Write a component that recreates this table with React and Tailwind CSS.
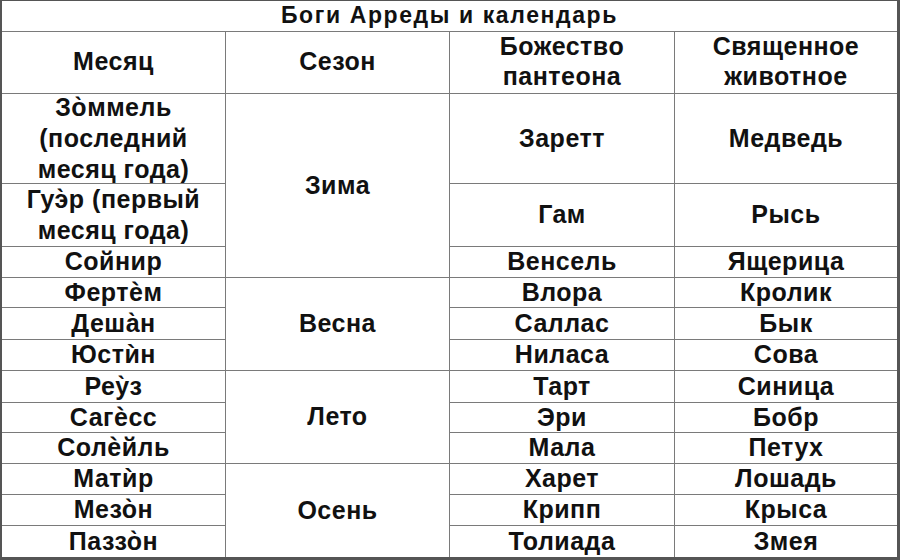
const months = [
  { name: ["Зо̀ммель", "(последний", "месяц года)"], god: "Заретт", animal: "Медведь", row: "row-start-3" },
  { name: ["Гуэ̀р (первый", "месяц года)"], god: "Гам", animal: "Рысь", row: "row-start-4" },
  { name: ["Сойнир"], god: "Венсель", animal: "Ящерица", row: "row-start-5" },
  { name: ["Фертѐм"], god: "Влора", animal: "Кролик", row: "row-start-6" },
  { name: ["Деша̀н"], god: "Саллас", animal: "Бык", row: "row-start-7" },
  { name: ["Юстѝн"], god: "Ниласа", animal: "Сова", row: "row-start-8" },
  { name: ["Реу̀з"], god: "Тарт", animal: "Синица", row: "row-start-9" },
  { name: ["Сагѐсс"], god: "Эри", animal: "Бобр", row: "row-start-10" },
  { name: ["Солѐйль"], god: "Мала", animal: "Петух", row: "row-start-11" },
  { name: ["Матѝр"], god: "Харет", animal: "Лошадь", row: "row-start-12" },
  { name: ["Мезо̀н"], god: "Крипп", animal: "Крыса", row: "row-start-13" },
  { name: ["Паззо̀н"], god: "Толиада", animal: "Змея", row: "row-start-14" },
];

const seasons = [
  { name: "Зима", row: "row-start-3 row-span-3" },
  { name: "Весна", row: "row-start-6 row-span-3" },
  { name: "Лето", row: "row-start-9 row-span-3" },
  { name: "Осень", row: "row-start-12 row-span-3" },
];

function Cell({ children, className = "" }) {
  return (
    <div className={"bg-white flex flex-col items-center justify-center text-center " + className}>
      {children}
    </div>
  );
}

export default function App() {
  return (
    <div className="w-[900px] h-[560px] bg-white border-t border-l-2 border-r-[3px] border-b-[3px] border-[#555] font-['Liberation_Sans',Arial,sans-serif] font-bold text-[#111] text-[25px] leading-[31px] tracking-[0.5px]">
      <div className="grid grid-cols-[223px_223px_224px_222px] grid-rows-[30px_61px_89px_62px_30px_29px_31px_30px_31px_29px_30px_30px_30px_31px] gap-px bg-[#7a7a7a] h-full">
        <Cell className="col-span-4 text-[23px] tracking-[1.6px] pb-[2px]">Боги Арреды и календарь</Cell>
        <Cell className="pb-[3px]">Месяц</Cell>
        <Cell className="pb-[3px]">Сезон</Cell>
        <Cell className="leading-[30px] pb-[3px]">
          <span>Божество</span>
          <span>пантеона</span>
        </Cell>
        <Cell className="leading-[30px] pb-[3px]">
          <span>Священное</span>
          <span>животное</span>
        </Cell>
        {months.map((m) => (
          <Cell key={"m" + m.god} className={"col-start-1 pb-[1px] " + m.row}>
            {m.name.map((l) => (
              <span key={l}>{l}</span>
            ))}
          </Cell>
        ))}
        {seasons.map((s) => (
          <Cell key={s.name} className={"col-start-2 pb-[1px] " + s.row}>
            {s.name}
          </Cell>
        ))}
        {months.map((m) => (
          <Cell key={"g" + m.god} className={"col-start-3 pb-[1px] " + m.row}>
            {m.god}
          </Cell>
        ))}
        {months.map((m) => (
          <Cell key={"a" + m.god} className={"col-start-4 pb-[1px] " + m.row}>
            {m.animal}
          </Cell>
        ))}
      </div>
    </div>
  );
}
